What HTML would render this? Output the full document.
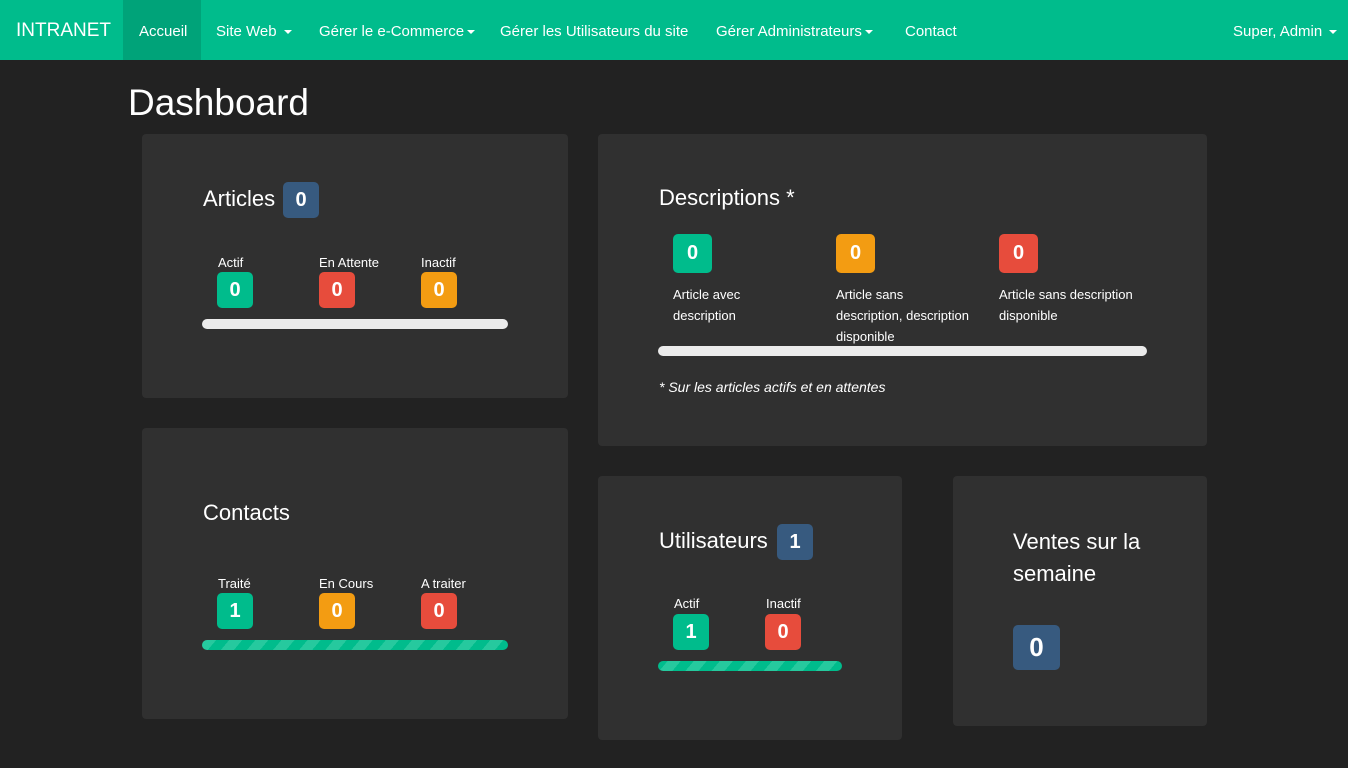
<!DOCTYPE html><html><head><meta charset="utf-8"><style>
*{box-sizing:border-box;margin:0;padding:0}
body{width:1348px;height:768px;background:#222;font-family:"Liberation Sans",sans-serif;color:#fff;position:relative;overflow:hidden}
.nav{position:absolute;left:0;top:0;width:1348px;height:60px;background:#00bc8c;font-size:15px}
.nav span{position:absolute;top:23px}
.car{display:inline-block;border-top:4px solid #fff;border-left:4px solid transparent;border-right:4px solid transparent;vertical-align:middle;margin-left:3px}
.p{position:absolute;background:#303030;border-radius:4px}
.a{position:absolute}
.t{font-size:22px}
.b{position:absolute;width:36px;height:36px;border-radius:4px;font-weight:bold;font-size:20px;text-align:center;line-height:36px}
.g{background:#00bc8c}.r{background:#e74c3c}.o{background:#f39c12}.bl{background:#375a7f}
.l{position:absolute;font-size:13px}
.bar{position:absolute;height:10px;border-radius:5px;background:#ebebeb}
.st{background:repeating-linear-gradient(-50deg,#00bc8c 0 10px,#26c99e 10px 20px)}
.b{border-radius:5px}
</style></head><body>
<div class="nav">
<span style="left:16px;top:20px;font-size:19px">INTRANET</span>
<div style="position:absolute;left:123px;top:0;width:78px;height:60px;background:#00a379"></div>
<span style="left:139px">Accueil</span>
<span style="left:216px">Site Web <i class="car"></i></span>
<span style="left:319px">Gérer le e-Commerce<i class="car"></i></span>
<span style="left:500px">Gérer les Utilisateurs du site</span>
<span style="left:716px">Gérer Administrateurs<i class="car"></i></span>
<span style="left:905px">Contact</span>
<span style="left:1233px">Super, Admin <i class="car"></i></span>
</div>
<div class="a" style="left:128px;top:82px;font-size:37px">Dashboard</div>

<div class="p" style="left:142px;top:134px;width:426px;height:264px"></div>
<div class="a t" style="left:203px;top:186px">Articles</div>
<div class="b bl" style="left:283px;top:182px">0</div>
<div class="l" style="left:218px;top:255px">Actif</div><div class="b g" style="left:217px;top:272px">0</div>
<div class="l" style="left:319px;top:255px">En Attente</div><div class="b r" style="left:319px;top:272px">0</div>
<div class="l" style="left:421px;top:255px">Inactif</div><div class="b o" style="left:421px;top:272px">0</div>
<div class="bar" style="left:202px;top:319px;width:306px"></div>

<div class="p" style="left:142px;top:428px;width:426px;height:291px"></div>
<div class="a t" style="left:203px;top:500px">Contacts</div>
<div class="l" style="left:218px;top:576px">Traité</div><div class="b g" style="left:217px;top:593px">1</div>
<div class="l" style="left:319px;top:576px">En Cours</div><div class="b o" style="left:319px;top:593px">0</div>
<div class="l" style="left:421px;top:576px">A traiter</div><div class="b r" style="left:421px;top:593px">0</div>
<div class="bar st" style="left:202px;top:640px;width:306px"></div>

<div class="p" style="left:598px;top:134px;width:609px;height:312px"></div>
<div class="a t" style="left:659px;top:185px">Descriptions *</div>
<div class="b g" style="left:673px;top:234px;width:39px;height:39px;line-height:39px">0</div>
<div class="b o" style="left:836px;top:234px;width:39px;height:39px;line-height:39px">0</div>
<div class="b r" style="left:999px;top:234px;width:39px;height:39px;line-height:39px">0</div>
<div class="l" style="left:673px;top:284px;line-height:21px">Article avec<br>description</div>
<div class="l" style="left:836px;top:284px;line-height:21px">Article sans<br>description, description<br>disponible</div>
<div class="l" style="left:999px;top:284px;line-height:21px">Article sans description<br>disponible</div>
<div class="bar" style="left:658px;top:346px;width:489px"></div>
<div class="l" style="left:659px;top:379px;font-size:14px;font-style:italic">* Sur les articles actifs et en attentes</div>

<div class="p" style="left:598px;top:476px;width:304px;height:264px"></div>
<div class="a t" style="left:659px;top:528px">Utilisateurs</div>
<div class="b bl" style="left:777px;top:524px">1</div>
<div class="l" style="left:674px;top:596px">Actif</div><div class="b g" style="left:673px;top:614px">1</div>
<div class="l" style="left:766px;top:596px">Inactif</div><div class="b r" style="left:765px;top:614px">0</div>
<div class="bar st" style="left:658px;top:661px;width:184px"></div>

<div class="p" style="left:953px;top:476px;width:254px;height:250px"></div>
<div class="a t" style="left:1013px;top:526px;line-height:32px">Ventes sur la<br>semaine</div>
<div class="b bl" style="left:1013px;top:625px;width:47px;height:45px;line-height:45px;font-size:26px">0</div>
</body></html>
